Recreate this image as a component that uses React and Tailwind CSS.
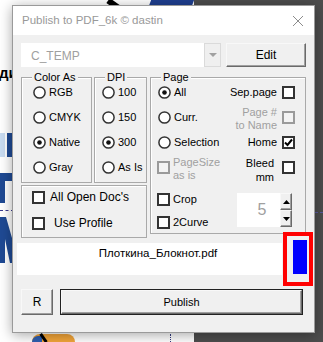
import React from 'react';

// classic win32 controls
const Radio = ({ checked }) => (
  <svg width="13" height="13" viewBox="0 0 13 13" className="shrink-0">
    <circle cx="6.5" cy="6.5" r="5.6" fill="#fff" stroke="#333" strokeWidth="1.5" />
    {checked && <circle cx="6.5" cy="6.5" r="2.3" fill="#111" />}
  </svg>
);

const Check = ({ checked, disabled }) => (
  <span
    className={
      'shrink-0 flex items-center justify-center w-[13px] h-[13px] border-2 ' +
      (disabled ? 'border-[#9a9a9a] bg-[#f3f3f3]' : 'border-[#333] bg-white')
    }
  >
    {checked && (
      <svg width="9" height="9" viewBox="0 0 9 9">
        <path d="M1 4.5 L3.5 7 L8 1.5" fill="none" stroke="#000" strokeWidth="2" />
      </svg>
    )}
  </span>
);

const RadioRow = ({ checked, label }) => (
  <div className="flex items-center gap-[3px] h-[25px]">
    <Radio checked={checked} />
    <span>{label}</span>
  </div>
);

const Group = ({ title, className, children }) => (
  <div className={'relative border border-[#a9a9a9] shadow-[inset_1px_1px_0_#fff] ' + className}>
    <span className="absolute -top-[8px] left-[10px] px-[2px] bg-[#f0f0f0] leading-[14px]">{title}</span>
    {children}
  </div>
);

const btn3d =
  'border border-t-[#f8f8f8] border-l-[#f8f8f8] border-r-[#6a6a6a] border-b-[#6a6a6a] shadow-[inset_-1px_-1px_0_#a0a0a0] bg-[#f0f0f0]';

export default function App() {
  return (
    <div className="relative w-[323px] h-[342px] overflow-hidden bg-white font-['Liberation_Sans',Arial,sans-serif] text-[11px] text-black">
      {/* desktop behind the dialog */}
      <div className="absolute left-[194px] top-0 w-[129px] h-[342px] bg-[#4d4d4d]" />
      <div className="absolute left-[110px] -top-[2px] w-[6px] h-[12px] bg-black rotate-[-55deg]" />
      <div className="absolute left-[150px] top-0 w-[43px] h-[6px] bg-[#1f3f8f] skew-x-[-20deg]" />
      <span className="absolute -left-[1px] top-[62px] text-[15px] font-bold">ди</span>
      <div className="absolute left-0 top-[133px] w-[5px] h-[24px] bg-[#c9dcf1]" />
      <div className="absolute left-[7px] top-[133px] w-[6px] h-[24px] bg-[#1f4a94]" />
      <div className="absolute left-0 top-[173px] w-[14px] h-[8px] bg-[#1f4a94]" />
      <div className="absolute left-0 top-[181px] w-[5px] h-[22px] bg-[#1f4a94]" />
      <div className="absolute left-0 top-[210px] w-[14px] border-t border-dashed border-[#3b3b8f]" />
      <div className="absolute left-[315px] top-[212px] w-[8px] border-t border-dashed border-[#5a5aa0]" />
      <svg className="absolute left-0 top-[217px]" width="14" height="46">
        <polygon points="0,0 6,0 14,28 14,46 10,46 5,22 5,46 0,46" fill="#1f4a94" />
      </svg>
      <div className="absolute left-[32px] top-[334px] w-[43px] h-[10px] rounded-t-[8px] bg-[#f2a53a]" />
      <div className="absolute left-[32px] top-[336px] w-[10px] h-[8px] rounded-tl-[6px] bg-[#2f5fb0]" />
      <div className="absolute left-[42px] top-[333px] w-[3px] h-[10px] bg-black rotate-[-35deg]" />
      <div className="absolute left-[170px] top-[334px] h-[8px] border-l border-dotted border-[#333a80]" />

      {/* dialog window */}
      <div className="absolute left-[12px] top-[5px] w-[303px] h-[328px] flex flex-col border border-[#9a9a9a] bg-[#f0f0f0] shadow-[0_2px_12px_rgba(0,0,0,0.35)]">
        <div className="h-[29px] shrink-0 flex items-center justify-between pl-[9px] pr-[11px] bg-white">
          <span className="text-[11.5px] text-[#999] pt-[1px]">Publish to PDF_6k © dastin</span>
          <svg width="10" height="10" viewBox="0 0 10 10">
            <path d="M0 0 L10 10 M10 0 L0 10" stroke="#8c8c8c" strokeWidth="1" />
          </svg>
        </div>

        <div className="flex mt-[8px] ml-[8px]">
          <div className="w-[200px] h-[24px] flex bg-white">
            <span className="flex-1 pl-[10px] pt-[4px] text-[12px] text-[#a0a0a0]">C_TEMP</span>
            <div className="w-[17px] h-full flex items-center justify-center border border-[#dadada] bg-[#efefef]">
              <svg width="8" height="5" viewBox="0 0 8 5">
                <polygon points="0,0 8,0 4,4" fill="#a0a0a0" />
              </svg>
            </div>
          </div>
          <button className={'ml-[5px] w-[80px] h-[24px] text-[12px] ' + btn3d}>Edit</button>
        </div>

        <div className="flex items-start gap-[3px] mt-[10px] ml-[8px]">
          <div className="w-[126px] flex flex-col gap-[2px]">
            <div className="flex gap-[2px]">
              <Group title="Color As" className="w-[71px] h-[106px] pt-[2px] pl-[11px]">
                <RadioRow label="RGB" />
                <RadioRow label="CMYK" />
                <RadioRow label="Native" checked />
                <RadioRow label="Gray" />
              </Group>
              <Group title="DPI" className="w-[53px] h-[106px] pt-[2px] pl-[7px]">
                <RadioRow label="100" />
                <RadioRow label="150" />
                <RadioRow label="300" checked />
                <RadioRow label="As Is" />
              </Group>
            </div>
            <div className="w-[126px] h-[53px] border border-[#a9a9a9] shadow-[inset_1px_1px_0_#fff] pl-[10px] text-[12px]">
              <div className="flex items-center gap-[5px] h-[22px]">
                <Check />
                <span>All Open Doc's</span>
              </div>
              <div className="flex items-center gap-[9px] h-[22px] mt-[4px]">
                <Check />
                <span>Use Profile</span>
              </div>
            </div>
          </div>

          <Group title="Page" className="w-[156px] h-[157px] pt-[2px] pl-[6px] pr-[10px]">
            <div className="flex items-center justify-between h-[25px]">
              <div className="ml-[1px]"><RadioRow label="All" checked /></div>
              <div className="flex items-center gap-[5px]">
                <span>Sep.page</span>
                <Check />
              </div>
            </div>
            <div className="flex items-center justify-between h-[25px]">
              <div className="ml-[1px]"><RadioRow label="Curr." /></div>
              <div className="flex items-center gap-[5px]">
                <span className="text-right leading-[13px] mt-[3px] text-[#a0a0a0]">Page #<br />to Name</span>
                <Check disabled />
              </div>
            </div>
            <div className="flex items-center justify-between h-[25px]">
              <div className="ml-[1px]"><RadioRow label="Selection" /></div>
              <div className="flex items-center gap-[5px]">
                <span>Home</span>
                <Check checked />
              </div>
            </div>
            <div className="flex items-center justify-between h-[25px]">
              <div className="flex items-center gap-[3px]">
                <Check disabled />
                <span className="leading-[13px] mt-[3px] text-[#a0a0a0]">PageSize<br />as is</span>
              </div>
              <div className="flex items-center gap-[8px]">
                <span className="text-right leading-[14px] mt-[4px]">Bleed<br />mm</span>
                <Check />
              </div>
            </div>
            <div className="flex justify-between mt-[7px]">
              <div className="flex flex-col">
                <div className="flex items-center gap-[3px] h-[24px]">
                  <Check />
                  <span>Crop</span>
                </div>
                <div className="flex items-center gap-[3px] h-[22px]">
                  <Check />
                  <span>2Curve</span>
                </div>
              </div>
              <div className="flex mt-[6px] mr-[3px]">
                <div className="w-[43px] h-[34px] flex items-center justify-center pl-[7px] bg-white text-[16px] text-[#a0a0a0]">5</div>
                <div className="flex flex-col">
                  <div className={'w-[12px] h-[17px] flex items-center justify-center ' + btn3d}>
                    <svg width="7" height="4" viewBox="0 0 7 4"><polygon points="0,4 7,4 3.5,0" fill="#000" /></svg>
                  </div>
                  <div className={'w-[12px] h-[17px] flex items-center justify-center ' + btn3d}>
                    <svg width="7" height="4" viewBox="0 0 7 4"><polygon points="0,0 7,0 3.5,4" fill="#000" /></svg>
                  </div>
                </div>
              </div>
            </div>
          </Group>
        </div>

        <div className="mt-[5px] ml-[4px] w-[265px] h-[32px] bg-white pl-[17px] pt-[2px] text-center text-[11.5px]">
          Плоткина_Блокнот.pdf
        </div>

        <div className="flex mt-[14px] ml-[8px]">
          <button className={'w-[32px] h-[26px] text-[12px] ' + btn3d}>R</button>
          <div className="ml-[7px] w-[243px] h-[26px] border border-[#222]">
            <button className={'w-full h-full text-[11px] ' + btn3d}>Publish</button>
          </div>
        </div>
      </div>

      {/* colour indicator overlay */}
      <div className="absolute left-[283px] top-[232px] w-[30px] h-[54px] border-4 border-[#ff0000] pt-[4px] pl-[6px]">
        <div className="w-[14px] h-[34px] bg-[#0000ff]" />
      </div>
    </div>
  );
}
